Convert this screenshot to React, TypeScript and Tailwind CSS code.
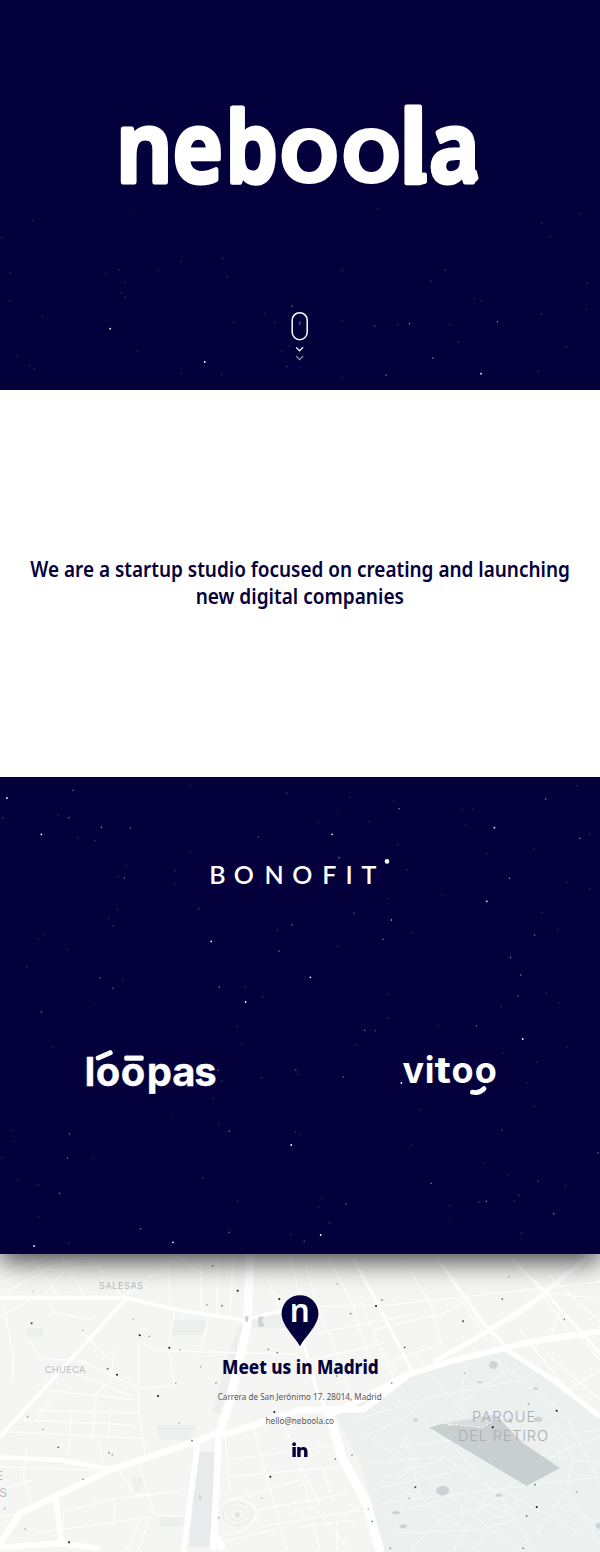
import React from "react";

type Star = [number, number, number];

const heroStars: Star[] = [
  [87, 62, 0.2], [340, 33, 0.15], [987, 26, 0.2], [1415, 68, 0.2], [1518, 43, 0.18], [1438, 110, 0.2], [4, 113, 0.2],
  [472, 184, 0.2], [582, 175, 0.25], [311, 210, 0.22], [276, 221, 0.22], [413, 210, 0.22], [594, 231, 0.25], [327, 247, 0.2],
  [317, 279, 0.2], [327, 291, 0.25], [27, 219, 0.2], [25, 303, 0.2], [111, 350, 0.2], [895, 211, 0.25], [1163, 210, 0.25],
  [1126, 243, 0.28], [1535, 249, 0.2], [1240, 296, 0.2], [1258, 302, 0.2], [1532, 328, 0.2], [1415, 342, 0.25],
  [763, 318, 0.55], [692, 342, 0.2], [718, 367, 0.2], [610, 367, 0.2], [288, 386, 1], [359, 453, 0.2], [535, 486, 1],
  [45, 469, 0.2], [77, 495, 0.2], [89, 507, 0.25], [473, 520, 0.2], [579, 523, 0.2], [736, 453, 0.2], [757, 438, 0.2],
  [750, 500, 0.3], [894, 363, 0.25], [979, 378, 0.3], [1039, 374, 0.22], [1070, 371, 0.55], [1176, 374, 0.22],
  [1300, 365, 0.55], [1198, 427, 0.25], [1480, 441, 0.25], [1131, 474, 0.6], [1009, 525, 0.55], [895, 532, 0.2],
  [1257, 521, 1], [1407, 513, 0.2],
];

const upperStars: Star[] = [
  [18, 69, 0.95], [191, 46, 0.5], [497, 33, 0.15], [749, 54, 0.25], [915, 67, 0.2], [1029, 78, 0.2], [1043, 101, 0.6],
  [1426, 72, 0.6], [1508, 32, 0.2], [7, 129, 0.3], [152, 120, 0.22], [180, 128, 0.5], [265, 157, 0.6],
  [341, 160, 0.5], [108, 178, 1], [203, 189, 0.2], [248, 197, 0.25], [675, 186, 0.4], [868, 178, 0.95], [832, 141, 0.2],
  [883, 115, 0.15], [965, 140, 0.2], [1207, 103, 0.2], [1235, 103, 0.2], [1217, 150, 0.2], [1292, 158, 0.95],
  [1515, 190, 0.55], [1541, 177, 0.25], [1395, 222, 0.2], [1039, 210, 0.2], [886, 248, 0.55], [1271, 236, 0.2],
  [497, 230, 0.2], [457, 287, 0.25], [457, 328, 0.2], [325, 309, 0.5], [308, 305, 0.2], [331, 273, 0.15],
  [1063, 284, 0.25], [1331, 310, 0.6], [1481, 322, 0.2], [1541, 342, 0.2], [1157, 359, 0.15], [1272, 379, 0.95],
  [1014, 371, 0.2], [519, 402, 0.3], [307, 403, 0.2], [285, 430, 0.2], [296, 453, 0.25], [763, 450, 0.5], [925, 414, 0.4],
  [1023, 435, 0.8], [1001, 493, 0.55], [1077, 473, 0.2], [1417, 413, 0.25], [1397, 480, 0.5], [1459, 465, 0.2],
  [725, 466, 0.25], [729, 529, 0.5], [552, 499, 1], [99, 492, 0.2], [115, 477, 0.15], [176, 523, 0.2], [70, 575, 0.25],
  [262, 609, 0.4], [295, 640, 0.4], [321, 616, 0.2], [573, 636, 0.55], [641, 635, 0.2], [811, 607, 0.95],
  [642, 681, 1], [686, 665, 0.25], [882, 514, 0.2], [1334, 547, 0.55], [1361, 600, 0.55], [1354, 663, 0.5],
  [1309, 694, 0.25], [1428, 654, 0.2], [1460, 684, 0.2], [1012, 658, 0.2], [108, 712, 0.5], [245, 689, 0.15],
];

const lowerStars: Star[] = [
  [1014, 8, 0.3], [620, 33, 0.2], [632, 88, 0.2], [953, 46, 0.5], [981, 47, 0.3], [1145, 33, 0.2], [1245, 33, 0.5],
  [1366, 72, 1], [929, 90, 0.2], [1482, 97, 0.2], [138, 96, 0.2], [1313, 114, 0.2], [1403, 142, 0.2], [773, 166, 0.4],
  [779, 178, 0.2], [684, 188, 0.25], [897, 186, 0.5], [1049, 204, 1], [1376, 204, 0.2], [570, 166, 0.4], [580, 198, 0.25],
  [557, 250, 0.2], [1100, 286, 0.2], [1397, 274, 0.2], [451, 300, 0.15], [572, 328, 0.2], [599, 349, 0.55],
  [181, 357, 0.5], [34, 345, 0.2], [37, 378, 0.2], [176, 429, 0.5], [243, 429, 0.2], [6, 428, 0.2], [771, 350, 0.25],
  [785, 357, 0.2], [761, 390, 1], [1075, 390, 0.2], [1311, 345, 0.35], [1563, 414, 0.5], [1264, 444, 0.2],
  [1328, 480, 0.2], [1407, 499, 0.3], [1477, 512, 0.2], [1127, 505, 0.55], [530, 490, 0.3], [47, 497, 0.2],
  [100, 511, 0.25], [156, 535, 0.5], [621, 559, 0.25], [840, 551, 0.2], [833, 576, 0.2], [904, 568, 0.5],
  [1175, 572, 0.2], [1252, 560, 0.3], [1271, 559, 0.6], [1344, 559, 0.25], [1356, 541, 0.25], [1447, 596, 0.6],
  [101, 605, 0.2], [367, 641, 0.55], [599, 652, 0.5], [861, 624, 0.25], [760, 658, 0.2], [838, 660, 1],
  [795, 679, 0.4], [1363, 655, 0.25], [89, 693, 1], [180, 685, 0.2], [452, 682, 1], [1175, 617, 0.15],
];

function Stars({ stars, height }: { stars: Star[]; height: number }) {
  return (
    <svg width="600" height={height} viewBox={`0 0 1568 ${height * 3}`} preserveAspectRatio="none" className="block shrink-0" aria-hidden="true">
      {stars.map(([x, y, o], i) => (
        <ellipse key={i} cx={x} cy={y} rx={o > 0.8 ? 2.3 : 1.9} ry={o > 0.8 ? 2.7 : 2.2} fill="#fff" opacity={o} />
      ))}
    </svg>
  );
}

function Wordmark() {
  return (
    <svg width="600" height="160" viewBox="0 60 600 160" className="block" role="img" aria-label="neboola">
      <g fill="#fff" stroke="#fff" strokeWidth="5" strokeLinejoin="round">
        <text y="181.500" fontFamily="'Noto Sans', sans-serif" fontWeight="600" fontSize="97">
          <tspan x="116.3" textLength="56" lengthAdjust="spacingAndGlyphs">n</tspan>
          <tspan x="172.8" textLength="50" lengthAdjust="spacingAndGlyphs">e</tspan>
          <tspan x="225.8" textLength="52" lengthAdjust="spacingAndGlyphs">b</tspan>
          <tspan x="278.300" y="182.300" fontFamily="Inter, sans-serif" fontSize="96" strokeWidth="2" fontWeight="600" textLength="62" lengthAdjust="spacingAndGlyphs">o</tspan>
          <tspan x="340.300" y="182.300" fontFamily="Inter, sans-serif" fontSize="96" strokeWidth="2" fontWeight="600" textLength="62" lengthAdjust="spacingAndGlyphs">o</tspan>
          <tspan x="399.300" y="181.500" fontSize="99">l</tspan>
          <tspan x="429.3" textLength="50" lengthAdjust="spacingAndGlyphs">a</tspan>
        </text>
        <path d="M415 173.500q1.500 2 9.500 1.500v6.500q-4 1.500-11 .500zM468 172h6.500l1.500 6-3 3z" />
      </g>
    </svg>
  );
}

function ScrollHint() {
  return (
    <svg width="24" height="56" viewBox="288 308 24 56" fill="none" stroke="#fff" strokeLinecap="round" aria-hidden="true">
      <rect x="292.2" y="312.7" width="15" height="27" rx="7.5" strokeWidth="1.5" />
      <path d="M299.8 321.5v3" stroke="#5a539f" strokeWidth="1.2" />
      <path d="M296.4 347.6l3.2 3.2 3.2-3.2" strokeWidth="1.3" />
      <path d="M296.4 356.4l3.2 3.2 3.2-3.2" strokeWidth="1.3" opacity="0.6" />
    </svg>
  );
}

function Bonofit() {
  return (
    <svg width="190" height="40" viewBox="205 852 190 40" role="img" aria-label="BONOFIT">
      <text x="209.300 233.700 264.500 292.200 322.300 345.500 361.600" y="884.4" fontFamily="Lato, sans-serif" fontWeight="600" fontSize="25" fill="#fff">BONOFIT</text>
      <circle cx="387" cy="861.4" r="2.3" fill="#fff" />
    </svg>
  );
}

function Loopas() {
  return (
    <svg width="140" height="56" viewBox="80 1044 140 56" role="img" aria-label="lóōpas">
      <text x="84.500 95.700 120.700 146.800 172.300 194.300" y="1085.800" fontFamily="Inter, sans-serif" fontWeight="700" fontSize="40" fill="#fff" stroke="#fff" strokeWidth=".3">loopas</text>
      <path d="M98.200 1058l12-5.300" stroke="#fff" strokeWidth="5" strokeLinecap="round" />
      <rect x="124.2" y="1055.5" width="19.5" height="5.2" rx="1.8" fill="#fff" />
    </svg>
  );
}

function Vitoo() {
  return (
    <svg width="104" height="56" viewBox="398 1044 104 56" role="img" aria-label="vitoo">
      <text y="1083" fontFamily="Inter, sans-serif" fontWeight="700" fontSize="36" fill="#fff">
        <tspan x="402.6">v</tspan>
        <tspan x="424.800">i</tspan>
        <tspan x="434.600" textLength="16.500" lengthAdjust="spacingAndGlyphs">t</tspan>
        <tspan x="451.500">o</tspan>
        <tspan x="474.800">o</tspan>
      </text>
      <path d="M472.4 1092.200Q479.500 1093.800 484 1088.600" stroke="#fff" strokeWidth="4.800" strokeLinecap="round" fill="none" />
    </svg>
  );
}

const mapDots: Star[] = [
  [713, 122, 1], [838, 147, 1], [95, 220, 0.8], [419, 256, 1], [508, 293, 1], [351, 374, 1], [474, 438, 1], [823, 486, 1],
  [811, 680, 1], [207, 877, 1], [323, 356, 0.7], [175, 592, 0.7], [327, 608, 0.5], [337, 614, 0.35], [576, 572, 0.6],
  [666, 167, 0.6], [621, 164, 0.35], [638, 48, 0.5], [805, 298, 0.5], [832, 308, 0.55], [648, 399, 0.5], [83, 500, 0.4],
  [129, 538, 0.35], [249, 688, 0.45], [540, 300, 0.35], [448, 259, 0.4], [656, 803, 0.35], [785, 744, 0.3], [248, 240, 0.3],
  [527, 400, 0.35], [602, 350, 0.3], [537, 519, 0.3], [14, 776, 0.3], [75, 837, 0.3], [400, 208, 0.3], [98, 124, 0.2],
  [1128, 168, 1], [1146, 150, 0.6], [1389, 214, 0.75], [1507, 147, 0.7], [1214, 292, 0.7], [1052, 191, 0.5], [1012, 102, 0.3],
  [1670, 482, 1], [1478, 532, 1], [1610, 771, 1], [1580, 798, 0.7], [1605, 704, 0.6], [1569, 895, 0.55], [1171, 895, 0.45],
  [1006, 627, 0.55], [1056, 615, 0.5], [1246, 712, 0.75], [1227, 745, 0.3], [1117, 814, 0.6], [1105, 777, 0.35],
  [1175, 399, 0.5], [1693, 208, 0.5], [1527, 80, 0.3], [1586, 462, 0.4], [1730, 726, 0.35], [1010, 378, 0.5], [1394, 370, 0.3],
];

function CityMap() {
  return (
    <svg width="600" height="297" viewBox="0 15 1800 891" preserveAspectRatio="none" className="block" aria-hidden="true">
      <rect y="15" width="1800" height="891" fill="#f5f6f4" />
      <path d="M1000 480L1220 378 1500 290 1800 500V906H1150L1090 660Z" fill="#ecf0ef" />
      <g fill="#e7ebeb">
        <path d="M590 605h58l-20 285h-60z" />
        <path d="M515 210h110l-20 45h-95zM750 195h110v38h-110zM470 525h120l-20 45h-90zM395 680l42 6-32 48zM715 225l18 8-70 260-28-8z" opacity=".65" />
        <path d="M80 235h50v25H80zM480 800h70v30h-70z" opacity=".6" />
      </g>
      <g fill="none" stroke="#fff" strokeWidth="4" opacity=".85">
        <path d="M0 75L160 15M0 95L260 20M90 15L180 145M180 15L260 145M265 15L370 145M10 130L140 60 300 50M120 145L220 35M360 145L540 20M505 15L510 170M600 15L605 195M530 20L610 70M655 15L650 200M700 15L690 205" />
        <path d="M0 200L100 145M10 170L40 310 38 390M90 270L120 325 205 330M150 150l10 35 110 25M415 285L415 470 435 610M430 280l40 22 420 10M525 170L505 300 525 410M625 205L600 310M235 330L420 415 525 405M200 360L400 440M140 420L410 450M110 480L420 490M70 510L400 525M20 545L430 565M215 490L205 620M290 430L275 565M345 300L330 390 290 430M250 250L330 330M330 485L325 565M170 430L110 510M295 565L310 640M80 590L70 680 95 760M0 650L310 662M360 665L405 735 540 725M415 640L465 795 550 800M180 790L340 745 460 735M100 850L460 800M345 745L340 825M190 840L190 790M380 900L420 810M415 900L450 800M0 720L100 690M0 800L70 790" />
        <path d="M760 15L755 190M840 180L800 80M870 15L900 140 940 170 1170 165 1400 140 1800 95M910 20L950 160 1010 310 1050 430M985 20L1060 170 1110 340M1080 155L1180 380M1210 30L1290 160 1330 300M1320 30L1430 230M1400 145L1460 270M1590 80L1720 265M1640 70L1800 215M1520 220L1650 130 1790 145M1120 240L1330 190 1410 145M1130 350L1300 290M950 250L1250 190M930 330L1150 280M1680 180L1650 270M1650 320L1800 450M1560 240L1700 420M1800 360L1690 430M1740 260L1800 330" />
        <path d="M675 560L690 730M760 535L800 680 860 900M850 515L900 650 960 760M680 630L980 590M680 680L1020 650M690 750L900 690M770 780L1040 730M870 790L940 770 1050 900M780 830L1080 780M650 880L820 840M910 690L935 780M970 660L1000 760M900 830L1070 810M960 900L940 820M1010 900L1010 820M1040 760L1070 780M670 760C700 740 740 740 770 780 770 830 720 850 660 860" />
      </g>
      <g fill="none" stroke="#f8faf9" strokeWidth="3" opacity=".9">
        <path d="M1060 510L1300 440 1560 390M1160 420L1370 600 1550 800M1120 570L1290 690 1500 860M1290 370L1490 600M1400 340L1380 460 1520 360M1150 600L1420 560M1110 640L1330 620 1480 720M1150 680L1330 630M1090 560L1220 500 1310 430M1110 720L1380 660M1140 760L1800 680M1150 800L1290 760 1380 730 1530 790M1180 850L1440 840 1570 800M1230 900L1330 800 1460 770M1360 900L1440 780 1500 740M1500 740L1600 900M1540 740L1760 860M1540 700L1690 600 1800 560M1590 610L1800 640M1620 560L1800 540M1650 500L1720 620 1700 720 1610 850M1700 500L1800 700M1490 330L1680 480M1420 900L1470 840 1570 900M1700 720L1800 880M1650 760L1800 820M1210 560L1260 720 1190 790M1160 650L1220 560 1250 640 1180 700 1320 780M1300 790a45 35 0 1 0 80-20M1450 760a50 40 0 1 0 100 0 50 40 0 1 0-100 0" />
      </g>
      <g fill="none" stroke="#fff" strokeLinejoin="round">
        <path d="M750 15L742 225 690 450 655 560" strokeWidth="26" />
        <path d="M640 900L650 700 655 560 900 480 1090 478 1220 378" strokeWidth="20" />
        <path d="M0 143H380L530 180 730 210 900 170" strokeWidth="11" />
        <path d="M380 145L0 560" strokeWidth="11" />
        <path d="M0 880L60 790 330 660 600 570 660 545" strokeWidth="19" />
        <path d="M0 622L180 630 350 660" strokeWidth="13" />
        <path d="M595 570L550 906M165 735L185 880M0 892L180 880 300 895" strokeWidth="17" />
        <path d="M640 850L670 900" strokeWidth="22" />
        <path d="M985 480L1025 620 1100 760 1140 906" strokeWidth="28" />
        <path d="M1000 490L1080 450 1220 375 1350 335 1580 278 1700 258 1800 245" strokeWidth="18" />
        <path d="M1300 335L1420 270 1600 155 1770 15" strokeWidth="13" />
        <path d="M1505 290L1660 390 1800 500" strokeWidth="15" />
        <path d="M1060 25L1150 195 1240 370M1310 25L1380 120 1450 220 1510 280M1530 25L1630 120 1800 310M905 260L950 420 985 490" strokeWidth="9" />
      </g>
      <path d="M1288 533L1336 518 1348 528 1485 493 1570 580 1680 654 1580 708Z" fill="#c9cfd1" />
      <path d="M1330 520L1480 493 1495 505 1445 533Z" fill="#d8dcdd" stroke="#eef0f0" strokeWidth="4" strokeDasharray="8 5" />
      <g fill="#cdd3d5">
        <ellipse cx="1328" cy="722" rx="20" ry="15" /><ellipse cx="1480" cy="345" rx="13" ry="12" />
        <ellipse cx="1614" cy="508" rx="13" ry="8" /><ellipse cx="1210" cy="829" rx="11" ry="6" />
        <ellipse cx="1188" cy="788" rx="12" ry="5" /><ellipse cx="1497" cy="736" rx="10" ry="5" />
        <ellipse cx="1247" cy="510" rx="7" ry="5" /><ellipse cx="1796" cy="827" rx="9" ry="9" />
        <ellipse cx="1440" cy="397" rx="9" ry="3" /><ellipse cx="1607" cy="416" rx="7" ry="4" />
        <path d="M734 202q6-10 12 0l-3 14h-6zM775 202l15-3-5 18 8 6-5 8-13-2zM597 733l9 8-3 8-6-2z" />
      </g>
      <g fill="none" stroke="#e7ebea" strokeWidth="3">
        <ellipse cx="712" cy="792" rx="43" ry="34" /><ellipse cx="712" cy="792" rx="26" ry="20" />
      </g>
      <ellipse cx="712" cy="795" rx="7" ry="8" fill="#dfe3e3" />
      <g fontFamily="Inter, sans-serif" fill="#b8bbbb">
        <text x="297" y="118" fontSize="27" textLength="132">SALESAS</text>
        <text x="134" y="369" fontSize="28" textLength="122">CHUECA</text>
        <text x="-13" y="690" fontSize="36">E</text>
        <text x="-2" y="740" fontSize="36">S</text>
        <g fontWeight="300" fontSize="44" fill="#a9afb0">
          <text x="1416" y="515" textLength="190">PARQUE</text>
          <text x="1374" y="573" textLength="270">DEL RETIRO</text>
        </g>
      </g>
      {mapDots.map(([x, y, o], i) => (
        <circle key={i} cx={x} cy={y} r={o > 0.7 ? 3 : 2.6} fill="#111119" opacity={o} />
      ))}
    </svg>
  );
}

function Pin() {
  return (
    <svg width="38" height="62" viewBox="281 1285 38 62" className="block" role="img" aria-label="n">
      <path d="M300 1346.300C295 1337 281.600 1325.500 281.600 1313.600a18.400 18.400 0 0 1 36.800 0C318.400 1325.500 305 1337 300 1346.300Z" fill="#04003c" />
      <text x="289.800" y="1322" fontFamily="'Noto Sans', sans-serif" fontWeight="600" fontSize="33" textLength="20" lengthAdjust="spacingAndGlyphs" fill="#fff">n</text>
    </svg>
  );
}

export default function App() {
  return (
    <main className="w-[600px] h-[1552px] overflow-hidden bg-white font-['Noto_Sans',sans-serif] text-[#04003c]">
      <section className="relative h-[390px] bg-[#04003c] pt-[60px]">
        <Wordmark />
        <div className="absolute left-0 top-[200px]"><Stars stars={heroStars} height={190} /></div>
        <div className="flex justify-center pt-[88px]"><ScrollHint /></div>
      </section>

      <section className="relative z-20 flex h-[387px] flex-col items-center justify-center bg-white pb-px text-center text-[21px] leading-[27px] font-semibold">
        <p className="scale-x-[0.902] whitespace-nowrap">We are a startup studio focused on creating and launching</p>
        <p className="scale-x-[0.907] whitespace-nowrap">new digital companies</p>
      </section>

      <section className="relative z-10 h-[477px] bg-[#04003c] shadow-[0_8px_24px_rgba(0,0,0,0.7)]">
        <div className="absolute left-0 top-[-2px]">
          <Stars stars={upperStars} height={240} />
          <Stars stars={lowerStars} height={238} />
        </div>
        <div className="relative flex justify-center pt-[75px]"><Bonofit /></div>
        <div className="relative grid grid-cols-2 justify-items-center pt-[152px]">
          <Loopas />
          <Vitoo />
        </div>
      </section>

      <footer className="relative h-[298px]">
        <div className="absolute inset-0 pt-px"><CityMap /></div>
        <div className="relative flex flex-col items-center pt-[31px]">
          <Pin />
          <h2 className="mt-[6px] scale-x-[0.857] text-[20px] leading-[28px] font-extrabold whitespace-nowrap">Meet us in Madrid</h2>
          <p className="mt-[9px] scale-x-[0.857] text-[9.5px] leading-[13px] whitespace-nowrap text-[#555]">Carrera de San Jerónimo 17. 28014, Madrid</p>
          <p className="mt-[11px] scale-x-[0.86] text-[9.5px] leading-[13px] whitespace-nowrap text-[#555]">hello@neboola.co</p>
          <svg width="16" height="16" viewBox="0 0 16 16" className="mt-[15px]" fill="#04003c" aria-label="LinkedIn">
            <circle cx="2.100" cy="2.200" r="1.900" />
            <path d="M.4 5.100h3.400V15H.4zM5.200 5.100h3.200v1.300c.6-1 1.600-1.500 2.900-1.500 2.900 0 4.200 1.700 4.200 4.600V15h-3.400v-4.900c0-1.400-.3-2.300-1.600-2.300-1.400 0-1.900 1-1.900 2.400V15H5.200z" />
          </svg>
        </div>
      </footer>
    </main>
  );
}
